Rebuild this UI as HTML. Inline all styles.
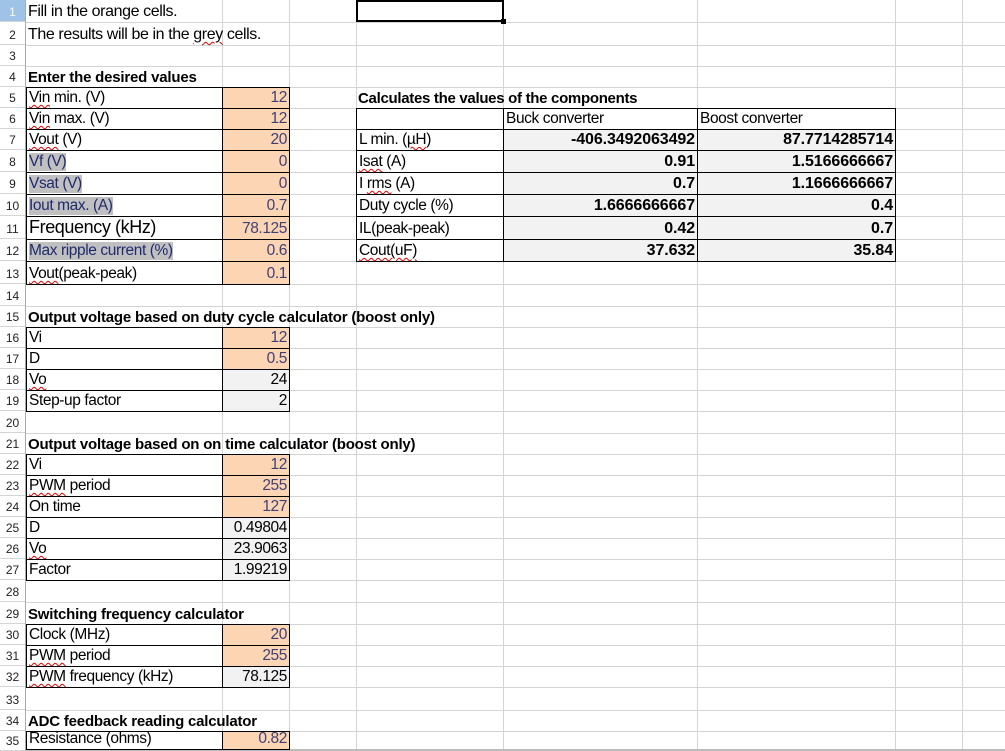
<!DOCTYPE html>
<html><head><meta charset="utf-8"><style>
body{margin:0;width:1005px;height:751px;overflow:hidden;background:#fff;font-family:"Liberation Sans",sans-serif;position:relative}
div{position:absolute;box-sizing:border-box}
.h{left:0;width:1005px;height:1px;background:#d4d4d4}
.v{top:0;height:751px;width:1px;background:#d4d4d4}
.rn{left:0;width:25px;font-size:12px;color:#222;text-align:center;background:#fff;border-bottom:1px solid #d4d4d4;display:flex;align-items:flex-end;justify-content:center;padding-bottom:2px}
.t{font-size:15.5px;color:#000;white-space:nowrap;display:flex;align-items:flex-end;padding:0 2px 1px 2px;letter-spacing:-0.4px}
.b{font-weight:bold;font-size:15px;letter-spacing:-0.2px}
.v2{font-weight:bold;font-size:16px;letter-spacing:-0.1px}
.bx{border:1px solid #000}
.or{background:#fcd5b4;color:#3f3f76;justify-content:flex-end}
.gr{background:#f2f2f2;justify-content:flex-end}
.w{text-decoration:underline wavy #e00000;text-decoration-thickness:1px;text-underline-offset:2px}
.gl{background:#c0c0c0;color:#1f2a6e}
</style></head><body>
<div class="v" style="left:222px"></div><div class="v" style="left:289px"></div><div class="v" style="left:356px"></div><div class="v" style="left:503px"></div><div class="v" style="left:697px"></div><div class="v" style="left:895px"></div><div class="v" style="left:962px"></div>
<div class="h" style="top:22px"></div><div class="h" style="top:45px"></div><div class="h" style="top:66px"></div><div class="h" style="top:87px"></div><div class="h" style="top:108px"></div><div class="h" style="top:129px"></div><div class="h" style="top:150px"></div><div class="h" style="top:172px"></div><div class="h" style="top:194px"></div><div class="h" style="top:216px"></div><div class="h" style="top:239px"></div><div class="h" style="top:261px"></div><div class="h" style="top:284px"></div><div class="h" style="top:306px"></div><div class="h" style="top:327px"></div><div class="h" style="top:348px"></div><div class="h" style="top:369px"></div><div class="h" style="top:390px"></div><div class="h" style="top:411px"></div><div class="h" style="top:433px"></div><div class="h" style="top:454px"></div><div class="h" style="top:475px"></div><div class="h" style="top:496px"></div><div class="h" style="top:517px"></div><div class="h" style="top:538px"></div><div class="h" style="top:559px"></div><div class="h" style="top:580px"></div><div class="h" style="top:602px"></div><div class="h" style="top:624px"></div><div class="h" style="top:645px"></div><div class="h" style="top:666px"></div><div class="h" style="top:687px"></div><div class="h" style="top:710px"></div><div class="h" style="top:731px"></div>
<div class="h" style="top:749px;height:2px;background:#bbb"></div>
<div class="rn" style="top:0;height:22px;background:#9fc3e7;color:#fff">1</div>
<div class="rn" style="top:22px;height:23px">2</div><div class="rn" style="top:45px;height:21px">3</div><div class="rn" style="top:66px;height:21px">4</div><div class="rn" style="top:87px;height:21px">5</div><div class="rn" style="top:108px;height:21px">6</div><div class="rn" style="top:129px;height:21px">7</div><div class="rn" style="top:150px;height:22px">8</div><div class="rn" style="top:172px;height:22px">9</div><div class="rn" style="top:194px;height:22px">10</div><div class="rn" style="top:216px;height:23px">11</div><div class="rn" style="top:239px;height:22px">12</div><div class="rn" style="top:261px;height:23px">13</div><div class="rn" style="top:284px;height:22px">14</div><div class="rn" style="top:306px;height:21px">15</div><div class="rn" style="top:327px;height:21px">16</div><div class="rn" style="top:348px;height:21px">17</div><div class="rn" style="top:369px;height:21px">18</div><div class="rn" style="top:390px;height:21px">19</div><div class="rn" style="top:411px;height:22px">20</div><div class="rn" style="top:433px;height:21px">21</div><div class="rn" style="top:454px;height:21px">22</div><div class="rn" style="top:475px;height:21px">23</div><div class="rn" style="top:496px;height:21px">24</div><div class="rn" style="top:517px;height:21px">25</div><div class="rn" style="top:538px;height:21px">26</div><div class="rn" style="top:559px;height:21px">27</div><div class="rn" style="top:580px;height:22px">28</div><div class="rn" style="top:602px;height:22px">29</div><div class="rn" style="top:624px;height:21px">30</div><div class="rn" style="top:645px;height:21px">31</div><div class="rn" style="top:666px;height:21px">32</div><div class="rn" style="top:687px;height:23px">33</div><div class="rn" style="top:710px;height:21px">34</div><div class="rn" style="top:731px;height:20px">35</div>
<div style="left:25px;top:0;width:1px;height:751px;background:#aaa"></div>

<div class="t" style="left:26px;top:0;height:22px;font-size:16px">Fill in the orange cells.</div>
<div class="t" style="left:26px;top:22px;height:23px;font-size:16px">The results will be in the&nbsp;<span class="w">grey</span>&nbsp;cells.</div>
<div style="left:356px;top:0;width:148px;height:22px;border:2px solid #000"></div>
<div style="left:501px;top:19px;width:5px;height:5px;background:#000"></div>

<div class="t b" style="left:26px;top:66px;height:21px">Enter the desired values</div>
<div class="t bx" style="left:26px;top:87px;width:197px;height:22px"><span class="w">Vin</span>&nbsp;min. (V)</div>
<div class="t bx or" style="left:222px;top:87px;width:68px;height:22px">12</div>
<div class="t bx" style="left:26px;top:108px;width:197px;height:22px"><span class="w">Vin</span>&nbsp;max. (V)</div>
<div class="t bx or" style="left:222px;top:108px;width:68px;height:22px">12</div>
<div class="t bx" style="left:26px;top:129px;width:197px;height:22px"><span class="w">Vout</span>&nbsp;(V)</div>
<div class="t bx or" style="left:222px;top:129px;width:68px;height:22px">20</div>
<div class="t bx" style="left:26px;top:150px;width:197px;height:23px"><span class="gl">Vf (V)</span></div>
<div class="t bx or" style="left:222px;top:150px;width:68px;height:23px">0</div>
<div class="t bx" style="left:26px;top:172px;width:197px;height:23px"><span class="gl">Vsat (V)</span></div>
<div class="t bx or" style="left:222px;top:172px;width:68px;height:23px">0</div>
<div class="t bx" style="left:26px;top:194px;width:197px;height:23px"><span class="gl">Iout max. (A)</span></div>
<div class="t bx or" style="left:222px;top:194px;width:68px;height:23px">0.7</div>
<div class="t bx" style="left:26px;top:216px;width:197px;height:24px;font-size:18px">Frequency (kHz)</div>
<div class="t bx or" style="left:222px;top:216px;width:68px;height:24px">78.125</div>
<div class="t bx" style="left:26px;top:239px;width:197px;height:23px"><span class="gl">Max ripple current (%)</span></div>
<div class="t bx or" style="left:222px;top:239px;width:68px;height:23px">0.6</div>
<div class="t bx" style="left:26px;top:261px;width:197px;height:24px"><span class="w">Vout</span>(peak-peak)</div>
<div class="t bx or" style="left:222px;top:261px;width:68px;height:24px">0.1</div>

<div class="t b" style="left:356px;top:87px;height:21px;font-size:15px;letter-spacing:-0.3px">Calculates the values of the components</div>
<div class="t bx" style="left:356px;top:108px;width:148px;height:22px"></div>
<div class="t bx" style="left:503px;top:108px;width:195px;height:22px">Buck converter</div>
<div class="t bx" style="left:697px;top:108px;width:199px;height:22px">Boost converter</div>
<div class="t bx" style="left:356px;top:129px;width:148px;height:22px">L min. (<span class="w">µH</span>)</div>
<div class="t bx gr v2" style="left:503px;top:129px;width:195px;height:22px">-406.3492063492</div>
<div class="t bx gr v2" style="left:697px;top:129px;width:199px;height:22px">87.7714285714</div>
<div class="t bx" style="left:356px;top:150px;width:148px;height:23px"><span class="w">Isat</span>&nbsp;(A)</div>
<div class="t bx gr v2" style="left:503px;top:150px;width:195px;height:23px">0.91</div>
<div class="t bx gr v2" style="left:697px;top:150px;width:199px;height:23px">1.5166666667</div>
<div class="t bx" style="left:356px;top:172px;width:148px;height:23px">I&nbsp;<span class="w">rms</span>&nbsp;(A)</div>
<div class="t bx gr v2" style="left:503px;top:172px;width:195px;height:23px">0.7</div>
<div class="t bx gr v2" style="left:697px;top:172px;width:199px;height:23px">1.1666666667</div>
<div class="t bx" style="left:356px;top:194px;width:148px;height:23px">Duty cycle (%)</div>
<div class="t bx gr v2" style="left:503px;top:194px;width:195px;height:23px">1.6666666667</div>
<div class="t bx gr v2" style="left:697px;top:194px;width:199px;height:23px">0.4</div>
<div class="t bx" style="left:356px;top:216px;width:148px;height:24px">IL(peak-peak)</div>
<div class="t bx gr v2" style="left:503px;top:216px;width:195px;height:24px">0.42</div>
<div class="t bx gr v2" style="left:697px;top:216px;width:199px;height:24px">0.7</div>
<div class="t bx" style="left:356px;top:239px;width:148px;height:23px"><span class="w">Cout(uF)</span></div>
<div class="t bx gr v2" style="left:503px;top:239px;width:195px;height:23px">37.632</div>
<div class="t bx gr v2" style="left:697px;top:239px;width:199px;height:23px">35.84</div>

<div class="t b" style="left:26px;top:306px;height:21px">Output voltage based on duty cycle calculator (boost only)</div>
<div class="t bx" style="left:26px;top:327px;width:197px;height:22px">Vi</div>
<div class="t bx or" style="left:222px;top:327px;width:68px;height:22px">12</div>
<div class="t bx" style="left:26px;top:348px;width:197px;height:22px">D</div>
<div class="t bx or" style="left:222px;top:348px;width:68px;height:22px">0.5</div>
<div class="t bx" style="left:26px;top:369px;width:197px;height:22px"><span class="w">Vo</span></div>
<div class="t bx gr" style="left:222px;top:369px;width:68px;height:22px">24</div>
<div class="t bx" style="left:26px;top:390px;width:197px;height:22px">Step-up factor</div>
<div class="t bx gr" style="left:222px;top:390px;width:68px;height:22px">2</div>

<div class="t b" style="left:26px;top:433px;height:21px">Output voltage based on on time calculator (boost only)</div>
<div class="t bx" style="left:26px;top:454px;width:197px;height:22px">Vi</div>
<div class="t bx or" style="left:222px;top:454px;width:68px;height:22px">12</div>
<div class="t bx" style="left:26px;top:475px;width:197px;height:22px"><span class="w">PWM</span>&nbsp;period</div>
<div class="t bx or" style="left:222px;top:475px;width:68px;height:22px">255</div>
<div class="t bx" style="left:26px;top:496px;width:197px;height:22px">On time</div>
<div class="t bx or" style="left:222px;top:496px;width:68px;height:22px">127</div>
<div class="t bx" style="left:26px;top:517px;width:197px;height:22px">D</div>
<div class="t bx gr" style="left:222px;top:517px;width:68px;height:22px">0.49804</div>
<div class="t bx" style="left:26px;top:538px;width:197px;height:22px"><span class="w">Vo</span></div>
<div class="t bx gr" style="left:222px;top:538px;width:68px;height:22px">23.9063</div>
<div class="t bx" style="left:26px;top:559px;width:197px;height:22px">Factor</div>
<div class="t bx gr" style="left:222px;top:559px;width:68px;height:22px">1.99219</div>

<div class="t b" style="left:26px;top:602px;height:22px">Switching frequency calculator</div>
<div class="t bx" style="left:26px;top:624px;width:197px;height:22px">Clock (MHz)</div>
<div class="t bx or" style="left:222px;top:624px;width:68px;height:22px">20</div>
<div class="t bx" style="left:26px;top:645px;width:197px;height:22px"><span class="w">PWM</span>&nbsp;period</div>
<div class="t bx or" style="left:222px;top:645px;width:68px;height:22px">255</div>
<div class="t bx" style="left:26px;top:666px;width:197px;height:22px"><span class="w">PWM</span>&nbsp;frequency (kHz)</div>
<div class="t bx gr" style="left:222px;top:666px;width:68px;height:22px">78.125</div>

<div class="t b" style="left:26px;top:710px;height:21px">ADC feedback reading calculator</div>
<div class="t bx" style="left:26px;top:731px;width:197px;height:19px">Resistance (ohms)</div>
<div class="t bx or" style="left:222px;top:731px;width:68px;height:19px">0.82</div>
</body></html>
